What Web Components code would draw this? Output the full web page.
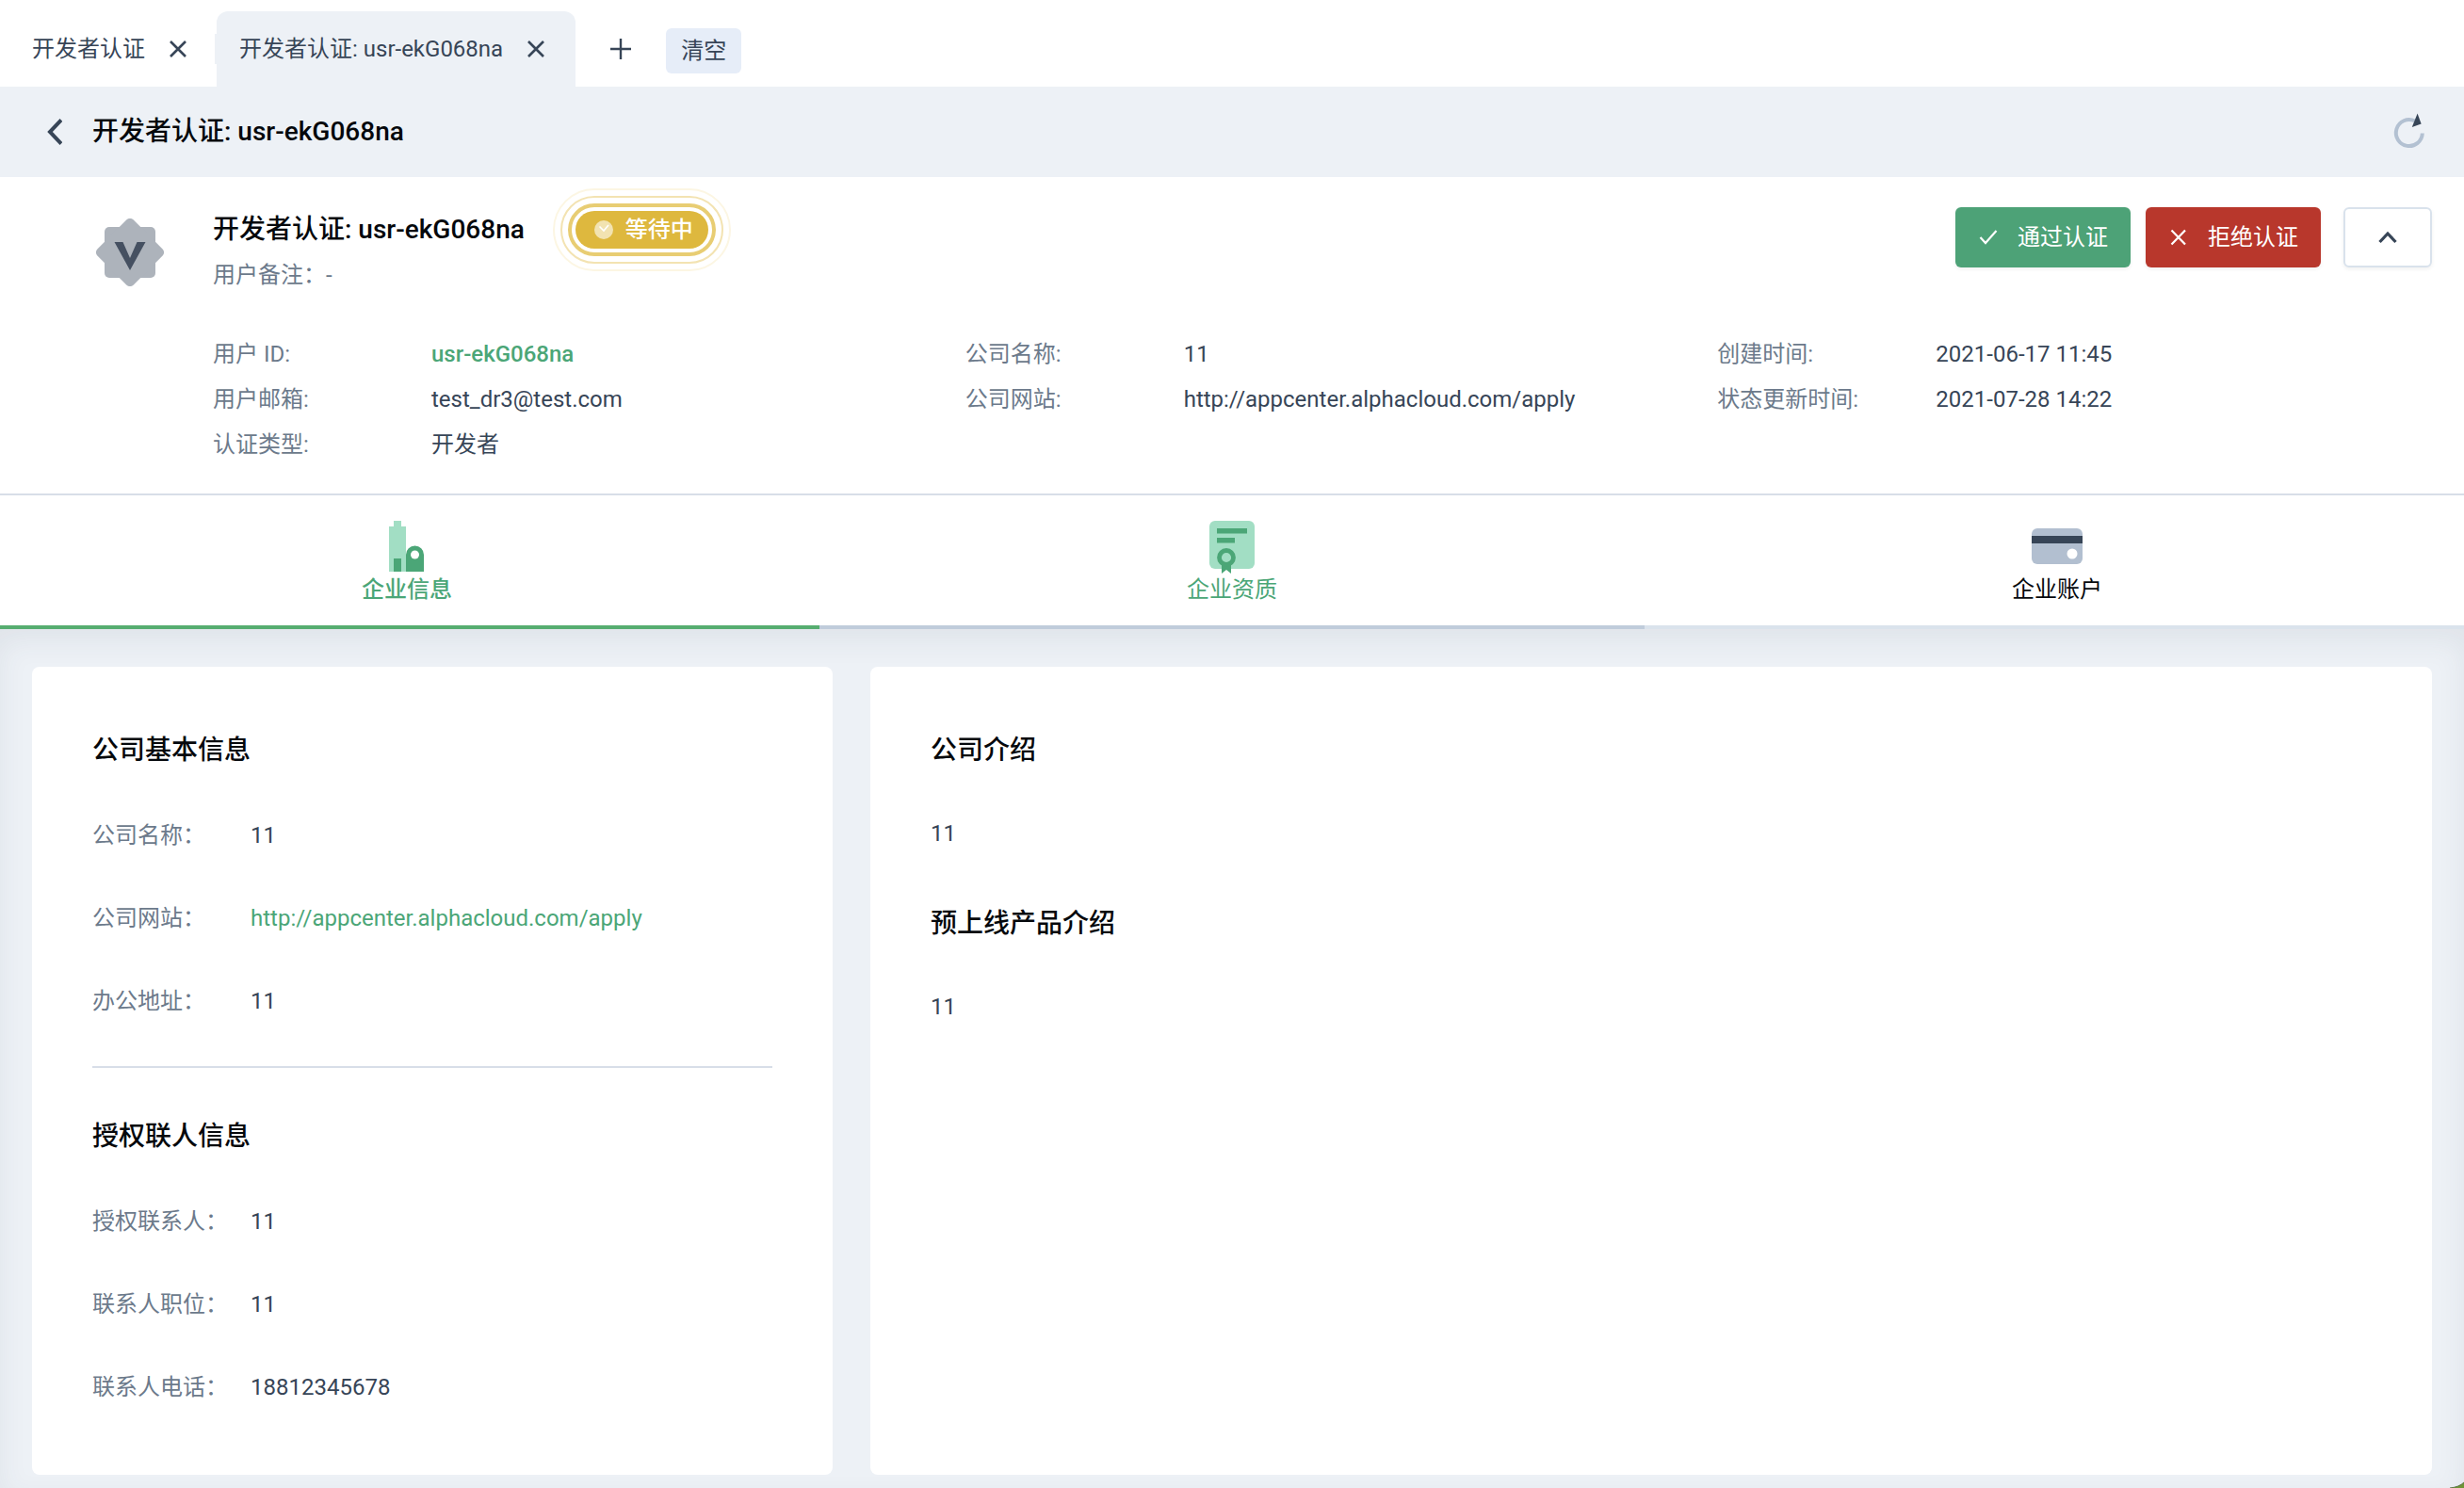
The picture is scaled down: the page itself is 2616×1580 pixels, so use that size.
<!DOCTYPE html>
<html lang="zh-CN">
<head>
<meta charset="utf-8">
<title>开发者认证</title>
<style>
html, body { height: 100%; }
body { margin: 0; background: #edf1f6; color: #374557; font: 400 24px/38px Roboto, "Noto Sans CJK SC", sans-serif; overflow: hidden; }
</style>
</head>
<body>
<cert-app></cert-app>
<script>
const define = (name, html) => {
  const t = document.createElement('template');
  t.innerHTML = html;
  customElements.define(name, class extends HTMLElement {
    constructor() {
      super();
      this.attachShadow({ mode: 'open' }).append(t.content.cloneNode(true));
    }
  });
};
const reset = `button { font: inherit; color: inherit; background: none; border: 0; padding: 0; margin: 0; cursor: pointer; }
  a { color: inherit; text-decoration: none; } svg { display: block; flex: none; } h1, h2, p { margin: 0; font: inherit; }`;

define('page-tab', `<style>${reset}
  :host { display: flex; align-items: center; gap: 26px; height: 80px; padding: 0 33px 0 24px; box-sizing: border-box; border-radius: 12px 12px 0 0; }
  :host([active]) { background: #edf1f6; }
  a { line-height: 80px; }
</style><a href="#"><slot></slot></a>
<button aria-label="关闭"><svg width="18" height="20" viewBox="0 0 18 20"><path d="M1 2L17 18M17 2L1 18" stroke="#374557" stroke-width="2.6" fill="none"/></svg></button>`);

define('page-tabs', `<style>${reset}
  :host { display: flex; align-items: flex-end; height: 92px; padding-left: 10px; background: #fff; }
  .sep { width: 2px; height: 32px; margin: 0 0 24px -3px; background: #edf1f6; }
  .add { padding: 0 37px; height: 80px; }
  .clear { height: 48px; padding: 0 16px; margin-bottom: 14px; line-height: 48px; border-radius: 6px; background: #e6edf8; }
</style><page-tab>开发者认证</page-tab><div class="sep"></div><page-tab active>开发者认证: usr-ekG068na</page-tab>
<button class="add" aria-label="新增"><svg width="22" height="22" viewBox="0 0 22 22"><path d="M11 0V22M0 11H22" stroke="#374557" stroke-width="2.4"/></svg></button>
<button class="clear">清空</button>`);

define('page-header', `<style>${reset}
  :host { display: flex; align-items: center; height: 96px; padding: 0 40px 0 50px; background: #edf1f6; }
  h1 { flex: 1; margin-left: 32px; font-size: 28px; font-weight: 500; color: #05080c; }
</style><button aria-label="返回"><svg width="16" height="28" viewBox="0 0 16 28"><path d="M15 1.5L3 14L15 26.5" stroke="#374557" stroke-width="4" fill="none"/></svg></button>
<h1>开发者认证: usr-ekG068na</h1>
<button aria-label="刷新"><svg width="36" height="40" viewBox="0 0 36 40"><path d="M23.6 8.3A14 14 0 1 0 31.8 21.5" stroke="#b3c1d2" stroke-width="4" fill="none"/><path d="M26.6 0.5L30.6 11.5L20.8 15Z" fill="#374557"/></svg></button>`);

define('status-badge', `<style>${reset}
  :host { position: relative; display: flex; align-items: center; gap: 13px; height: 40px; padding: 0 16px 0 20px; border-radius: 20px; background: #deb83e; color: #fff; line-height: 40px; font-weight: 500; }
  i { position: absolute; box-sizing: border-box; }
  i:nth-of-type(1) { inset: -8px; border: 4px solid #e8cd73; border-radius: 28px; }
  i:nth-of-type(2) { inset: -16px; border: 2px solid #f3e3b2; border-radius: 36px; }
  i:nth-of-type(3) { inset: -24px; border: 2px solid #fcf6e3; border-radius: 44px; }
</style><i></i><i></i><i></i>
<svg width="20" height="20" viewBox="0 0 20 20"><circle cx="10" cy="10" r="10" fill="#f2e3b1"/><path d="M5.5 6.5L10 11L15 5" stroke="#fff" stroke-width="1.6" fill="none"/></svg><span><slot></slot></span>`);

define('action-button', `<style>${reset}
  :host { display: block; }
  button { display: flex; align-items: center; justify-content: center; gap: 20px; height: 64px; padding: 0 24px; box-sizing: border-box; border-radius: 6px; color: #fff; background: #4da277; box-shadow: 0 2px 4px rgba(0,0,0,.06); }
  :host([kind=danger]) button { background: #b8372c; }
  :host([kind=plain]) button { width: 94px; background: #fff; border: 2px solid #d9e2ec; }
</style><button><slot name="icon"></slot><slot></slot></button>`);

define('info-item', `<style>${reset}
  :host { display: flex; line-height: 48px; }
  .k { flex: none; width: 232px; color: #6c7a8b; }
</style><span class="k"><slot name="k"></slot></span><span><slot></slot></span>`);

define('profile-panel', `<style>${reset}
  :host { display: flex; padding: 32px 34px 28px 102px; background: #fff; border-bottom: 2px solid #d8dee8; }
  .logo { margin: 12px 52px 0 0; }
  .main { flex: 1; }
  .top { display: flex; justify-content: space-between; }
  .name { display: flex; align-items: center; gap: 54px; height: 48px; }
  h2 { font-size: 28px; font-weight: 500; color: #05080c; }
  .note { line-height: 48px; color: #6c7a8b; }
  .acts { display: flex; }
  .acts > * + * { margin-left: 16px; }
  .acts > :last-child { margin-left: 24px; }
  .grid { display: grid; grid-template-columns: repeat(3, 1fr); gap: 0 40px; margin-top: 36px; }
  .grid a { color: #4ba677; font-weight: 500; }
</style>
<svg class="logo" width="72" height="72" viewBox="0 0 72 72"><g fill="#adb3bb"><rect x="9" y="9" width="54" height="54" rx="5"/><rect x="9" y="9" width="54" height="54" rx="5" transform="rotate(45 36 36)"/></g><path d="M19.500 25H28.500L36 42L43.500 25H52.500L36 55Z" fill="#455061"/></svg>
<div class="main">
  <div class="top"><div><div class="name"><h2>开发者认证: usr-ekG068na</h2><status-badge>等待中</status-badge></div><p class="note">用户备注：-</p></div>
  <div class="acts">
    <action-button><svg slot="icon" width="22" height="22" viewBox="0 0 22 22"><path d="M2.500 11L8 17L19.500 4" stroke="#fff" stroke-width="2.200" fill="none"/></svg>通过认证</action-button>
    <action-button kind="danger"><svg slot="icon" width="22" height="22" viewBox="0 0 22 22"><path d="M3.500 3.500L18 18.500M18 3.500L3.500 18.500" stroke="#fff" stroke-width="2.200" fill="none"/></svg>拒绝认证</action-button>
    <action-button kind="plain"><svg slot="icon" role="img" aria-label="收起" width="20" height="14" viewBox="0 0 20 14"><path d="M1.500 12L10 3L18.500 12" stroke="#374557" stroke-width="3.200" fill="none"/></svg></action-button>
  </div></div>
  <div class="grid">
    <div><info-item><span slot="k">用户 ID:</span><a href="#">usr-ekG068na</a></info-item><info-item><span slot="k">用户邮箱:</span>test_dr3@test.com</info-item><info-item><span slot="k">认证类型:</span>开发者</info-item></div>
    <div><info-item><span slot="k">公司名称:</span>11</info-item><info-item><span slot="k">公司网站:</span>http://appcenter.alphacloud.com/apply</info-item></div>
    <div><info-item><span slot="k">创建时间:</span>2021-06-17 11:45</info-item><info-item><span slot="k">状态更新时间:</span>2021-07-28 14:22</info-item></div>
  </div>
</div>`);

define('step-tab', `<style>${reset}
  :host { flex: 1 1 0; display: block; padding: 26px 6px 20px; border-bottom: 4px solid #dae3ec; color: #05080c; }
  :host(:first-of-type) { padding-left: 0; }
  :host(:last-of-type) { padding-right: 0; }
  :host([state=done]) { border-color: #c0ccdb; color: #4ba677; }
  :host([state=active]) { border-color: #56ad70; color: #4ba677; font-weight: 500; }
  button { display: flex; flex-direction: column; align-items: center; width: 100%; line-height: 36px; }
  ::slotted(svg) { overflow: visible; }
</style><button><slot name="icon"></slot><span><slot></slot></span></button>`);

define('step-tabs', `<style>${reset}
  :host { display: flex; background: #fff; }
</style>
<step-tab state="active"><svg slot="icon" width="56" height="56" viewBox="0 0 56 56"><path d="M9 55V7H14V1H22V7H27V55Z" fill="#a2dec4"/><path d="M14 41H22V55H14ZM27 55V37A9.500 9.500 0 0 1 46 37V55Z" fill="#4ba677"/><circle cx="36.500" cy="37" r="4.500" fill="#fff"/></svg>企业信息</step-tab>
<step-tab state="done"><svg slot="icon" width="56" height="56" viewBox="0 0 56 56"><rect x="4" y="1" width="48" height="51" rx="6" fill="#a2dec4"/><path d="M12 9H44V14.500H12ZM12 19H31V24.500H12ZM17 46V57L22 53L27 57V46Z" fill="#4ba677"/><circle cx="22" cy="40" r="7.500" fill="#a2dec4" stroke="#4ba677" stroke-width="4.800"/></svg>企业资质</step-tab>
<step-tab><svg slot="icon" width="56" height="56" viewBox="0 0 56 56"><rect x="1" y="9" width="54" height="38" rx="6" fill="#b2bfd0"/><path d="M1 17H55V25H1Z" fill="#374557"/><circle cx="44" cy="36" r="5.500" fill="#fff"/></svg>企业账户</step-tab>`);

define('detail-row', `<style>${reset}
  :host { display: flex; margin-bottom: 50px; }
  .k { flex: none; width: 168px; color: #6c7a8b; }
</style><span class="k"><slot name="k"></slot></span><span><slot></slot></span>`);

define('info-card', `<style>
  :host { display: block; box-sizing: border-box; padding: 64px 64px 24px; border-radius: 8px; background: #fff; }
</style><slot></slot>`);

define('cert-detail', `<style>${reset}
  :host { display: grid; grid-template-columns: 850fr 1658fr; gap: 40px; padding: 40px 34px 14px; box-sizing: border-box; flex: 1; background: #edf1f6; box-shadow: inset 0 12px 30px rgba(50,70,80,.075); }
  h2 { font-size: 28px; line-height: 50px; font-weight: 500; color: #05080c; margin-bottom: 46px; }
  hr { border: 0; height: 2px; margin: 0 0 48px; background: #d8dee8; }
  detail-row a { color: #4ba677; }
  .intro h2 { margin-bottom: 44px; }
  .intro p { margin-bottom: 52px; }
</style>
<info-card>
  <h2>公司基本信息</h2>
  <detail-row><span slot="k">公司名称：</span>11</detail-row>
  <detail-row><span slot="k">公司网站：</span><a href="#">http://appcenter.alphacloud.com/apply</a></detail-row>
  <detail-row><span slot="k">办公地址：</span>11</detail-row>
  <hr>
  <h2>授权联人信息</h2>
  <detail-row><span slot="k">授权联系人：</span>11</detail-row>
  <detail-row><span slot="k">联系人职位：</span>11</detail-row>
  <detail-row><span slot="k">联系人电话：</span>18812345678</detail-row>
</info-card>
<info-card class="intro"><h2>公司介绍</h2><p>11</p><h2>预上线产品介绍</h2><p>11</p></info-card>`);

define('cert-app', `<style>
  :host { display: flex; flex-direction: column; min-height: 100vh; }
  .corner { position: fixed; right: 0; bottom: 0; display: block; }
</style>
<page-tabs></page-tabs><page-header></page-header><profile-panel></profile-panel><step-tabs></step-tabs><cert-detail></cert-detail>
<svg class="corner" width="16" height="8" viewBox="0 0 16 8"><path d="M1 8Q11 7 16 2V8Z" fill="#6f9436"/><path d="M1 8Q11 7 16 2" stroke="#5c7343" stroke-width="1" fill="none"/></svg>`);
</script>
</body>
</html>
